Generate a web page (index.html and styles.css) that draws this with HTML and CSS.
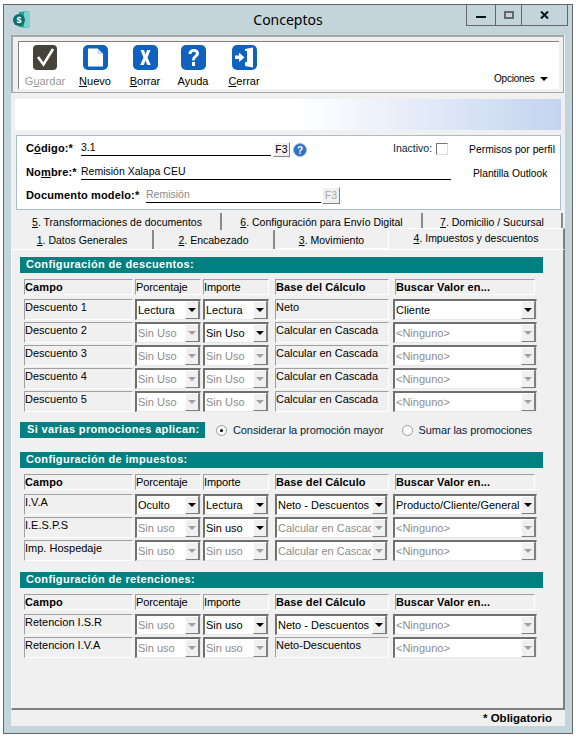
FILE: index.html
```html
<!DOCTYPE html>
<html lang="es">
<head>
<meta charset="UTF-8">
<meta name="viewport" content="width=device-width, initial-scale=1.0">
<title>Conceptos</title>
<link rel="stylesheet" href="styles.css">
</head>
<body>
<div class="window">

  <!-- Title bar -->
  <div class="titlebar">
    <svg class="app-icon" width="17" height="17" viewBox="0 0 17 17">
      <path d="M6 1 L15 0 L17 2 V15 L15 17 L6 16 Z" fill="#1fa39a"/>
      <path d="M11 1 L15 0 L17 2 V15 L15 17 L11 16 Z" fill="#7fd0c8"/>
      <circle cx="6" cy="9" r="6" fill="#0b6f6c"/>
      <text x="6" y="12" font-size="9" font-weight="bold" fill="#fff" text-anchor="middle" font-family="Liberation Sans">$</text>
    </svg>
    <div class="title">Conceptos</div>
    <div class="winbtns">
      <div class="winbtn btn-min"><span class="min-bar"></span></div>
      <div class="winbtn btn-max"><span class="max-box"></span></div>
      <div class="winbtn btn-close">
        <svg width="9" height="8" viewBox="0 0 9 8"><path d="M1 0.5 L8 7.5 M8 0.5 L1 7.5" stroke="#111" stroke-width="2"/></svg>
      </div>
    </div>
  </div>

  <div class="client">
    <!-- Toolbar -->
    <div class="toolbar">
      <div class="toolbar-inner">
        <div class="tool tool-guardar disabled">
          <svg width="24" height="25" viewBox="0 0 24 25">
            <rect width="24" height="25" rx="4" fill="#46433a"/>
            <path d="M5 12 L10.5 19.5 L20 4" fill="none" stroke="#fff" stroke-width="2.6"/>
          </svg>
          <span>G<u>u</u>ardar</span>
        </div>
        <div class="tool tool-nuevo">
          <svg width="25" height="25" viewBox="0 0 25 25">
            <rect width="25" height="25" rx="5" fill="#0f62bd"/>
            <path d="M5 3.5 H14.5 L20 9 V21.5 H5 Z" fill="#fff"/>
            <path d="M14.5 3.5 V9 H20" fill="#cfe0f2"/>
          </svg>
          <span><u>N</u>uevo</span>
        </div>
        <div class="tool tool-borrar">
          <svg width="25" height="25" viewBox="0 0 25 25">
            <rect width="25" height="25" rx="5" fill="#0f62bd"/>
            <path d="M7.5 5 H11 L12.5 9.5 L14 5 H17.5 L14.5 12.5 L17.8 20 H14.2 L12.5 15.5 L10.8 20 H7.2 L10.5 12.5 Z" fill="#fff"/>
          </svg>
          <span><u>B</u>orrar</span>
        </div>
        <div class="tool tool-ayuda">
          <svg width="25" height="25" viewBox="0 0 25 25">
            <rect width="25" height="25" rx="5" fill="#0f62bd"/>
            <path d="M7.5 9 C7.5 2.5 18 2.5 18 8.5 C18 12 13.8 12 13.8 15.5 H11 C11 10.5 14.8 11 14.8 8.5 C14.8 6 10.8 6 10.5 9 Z" fill="#fff"/>
            <rect x="11" y="17" width="3" height="4" fill="#fff"/>
          </svg>
          <span>Ayuda</span>
        </div>
        <div class="tool tool-cerrar">
          <svg width="25" height="25" viewBox="0 0 25 25">
            <rect width="25" height="25" rx="5" fill="#0f62bd"/>
            <path d="M13 4 L21 2.5 V22.5 L13 21 V17 H15 V6 H13 Z" fill="#fff"/>
            <path d="M3 10.5 H7 V7.5 L12.5 12.5 L7 17 V14 H3 Z" fill="#fff"/>
          </svg>
          <span><u>C</u>errar</span>
        </div>
        <div class="opciones">Opciones <span class="opciones-arrow"></span></div>
      </div>
    </div>

    <div class="banner-wrap"><div class="banner"></div></div>

    <!-- Header form -->
    <div class="head-form">
      <div class="head-row head-row-1">
        <span class="lbl lbl-codigo">C<u>ó</u>digo:*</span>
        <span class="field field-codigo">3.1</span>
        <span class="f3">F3</span>
        <svg class="help" width="14" height="14" viewBox="0 0 14 14">
          <circle cx="7" cy="7" r="6.5" fill="#2f6fc4" stroke="#9db8d8"/>
          <text x="7" y="11" font-size="10" font-weight="bold" fill="#fff" text-anchor="middle" font-family="Liberation Sans">?</text>
        </svg>
        <span class="inactivo">Inactivo:</span>
        <span class="check"></span>
        <span class="side side-permisos">Permisos por perfil</span>
      </div>
      <div class="head-row head-row-2">
        <span class="lbl lbl-nombre">No<u>m</u>bre:*</span>
        <span class="field field-nombre">Remisión Xalapa CEU</span>
        <span class="side side-plantilla">Plantilla Outlook</span>
      </div>
      <div class="head-row head-row-3">
        <span class="lbl lbl-doc">Documento modelo:*</span>
        <span class="field field-doc">Remisión</span>
        <span class="f3 f3-off">F3</span>
      </div>
    </div>

    <!-- Tabs -->
    <div class="tabs tabs-back">
      <div class="tab t5"><u>5</u>. Transformaciones de documentos</div>
      <div class="tab t6"><u>6</u>. Configuración para Envío Digital</div>
      <div class="tab t7"><u>7</u>. Domicilio / Sucursal</div>
    </div>
    <div class="tabs tabs-front">
      <div class="tab t1"><u>1</u>. Datos Generales</div>
      <div class="tab t2"><u>2</u>. Encabezado</div>
      <div class="tab t3"><u>3</u>. Movimiento</div>
      <div class="tab t4 active"><u>4</u>. Impuestos y descuentos</div>
    </div>

    <div class="panel">
      <div class="bar">Configuración de descuentos:</div>
      <div class="grid">
        <div class="cell head bold">Campo</div><div class="cell head">Porcentaje</div><div class="cell head">Importe</div><div class="cell head bold base">Base del Cálculo</div><div class="cell head bold buscar">Buscar Valor en...</div>

        <div class="cell">Descuento 1</div>
        <div class="sel">Lectura<i></i></div>
        <div class="sel">Lectura<i></i></div>
        <div class="cell base">Neto</div>
        <div class="sel buscar">Cliente<i></i></div>

        <div class="cell">Descuento 2</div>
        <div class="sel off">Sin Uso<i></i></div>
        <div class="sel">Sin Uso<i></i></div>
        <div class="cell base">Calcular en Cascada</div>
        <div class="sel off buscar">&lt;Ninguno&gt;<i></i></div>

        <div class="cell">Descuento 3</div>
        <div class="sel off">Sin Uso<i></i></div>
        <div class="sel off">Sin Uso<i></i></div>
        <div class="cell base">Calcular en Cascada</div>
        <div class="sel off buscar">&lt;Ninguno&gt;<i></i></div>

        <div class="cell">Descuento 4</div>
        <div class="sel off">Sin Uso<i></i></div>
        <div class="sel off">Sin Uso<i></i></div>
        <div class="cell base">Calcular en Cascada</div>
        <div class="sel off buscar">&lt;Ninguno&gt;<i></i></div>

        <div class="cell">Descuento 5</div>
        <div class="sel off">Sin Uso<i></i></div>
        <div class="sel off">Sin Uso<i></i></div>
        <div class="cell base">Calcular en Cascada</div>
        <div class="sel off buscar">&lt;Ninguno&gt;<i></i></div>
      </div>

      <div class="promo">
        <div class="bar bar-promo">Si varias promociones aplican:</div>
        <span class="radio on"></span><span class="radio-lbl">Considerar la promoción mayor</span>
        <span class="radio radio-2"></span><span class="radio-lbl">Sumar las promociones</span>
      </div>

      <div class="bar">Configuración de impuestos:</div>
      <div class="grid">
        <div class="cell head bold">Campo</div><div class="cell head">Porcentaje</div><div class="cell head">Importe</div><div class="cell head bold base">Base del Cálculo</div><div class="cell head bold buscar">Buscar Valor en...</div>

        <div class="cell">I.V.A</div>
        <div class="sel">Oculto<i></i></div>
        <div class="sel">Lectura<i></i></div>
        <div class="sel base">Neto - Descuentos<i></i></div>
        <div class="sel buscar">Producto/Cliente/General<i></i></div>

        <div class="cell">I.E.S.P.S</div>
        <div class="sel off">Sin uso<i></i></div>
        <div class="sel">Sin uso<i></i></div>
        <div class="sel off base">Calcular en Cascada<i></i></div>
        <div class="sel off buscar">&lt;Ninguno&gt;<i></i></div>

        <div class="cell">Imp. Hospedaje</div>
        <div class="sel off">Sin uso<i></i></div>
        <div class="sel off">Sin uso<i></i></div>
        <div class="sel off base">Calcular en Cascada<i></i></div>
        <div class="sel off buscar">&lt;Ninguno&gt;<i></i></div>
      </div>

      <div class="bar bar-ret">Configuración de retenciones:</div>
      <div class="grid">
        <div class="cell head bold">Campo</div><div class="cell head">Porcentaje</div><div class="cell head">Importe</div><div class="cell head bold base">Base del Cálculo</div><div class="cell head bold buscar">Buscar Valor en...</div>

        <div class="cell">Retencion I.S.R</div>
        <div class="sel off">Sin uso<i></i></div>
        <div class="sel">Sin uso<i></i></div>
        <div class="sel base">Neto - Descuentos<i></i></div>
        <div class="sel off buscar">&lt;Ninguno&gt;<i></i></div>

        <div class="cell">Retencion I.V.A</div>
        <div class="sel off">Sin uso<i></i></div>
        <div class="sel off">Sin uso<i></i></div>
        <div class="cell base">Neto-Descuentos</div>
        <div class="sel off buscar">&lt;Ninguno&gt;<i></i></div>
      </div>
    </div>

    <div class="footer">* Obligatorio</div>
  </div>
</div>
</body>
</html>
```

FILE: styles.css
```css
/* Basic Reset */
* {
    box-sizing: border-box;
}

body {
    margin: 0;
    padding: 0;
    background: #fff;
    font-family: "Liberation Sans", sans-serif;
    font-size: 11px;
    color: #000;
}

/* Window */
.window {
    width: 570px;
    height: 730px;
    margin: 4px 0 0 3px;
    background: #c3d5db;
    border: 1px solid #666;
}

.titlebar {
    height: 30px;
    position: relative;
}

.app-icon {
    position: absolute;
    left: 9px;
    top: 6px;
}

.title {
    text-align: center;
    font-family: "Noto Sans", sans-serif;
    font-size: 14px;
    line-height: 30px;
}

.winbtns {
    position: absolute;
    top: 0;
    left: 462px;
    display: flex;
    height: 21px;
    border: 1px solid #666;
    border-top: 0;
}

.winbtn {
    display: flex;
    align-items: center;
    justify-content: center;
    border-left: 1px solid #666;
}

.winbtn:first-child {
    border-left: 0;
}

.btn-min { width: 28px; }
.btn-max { width: 26px; }
.btn-close { width: 46px; }

.min-bar {
    width: 10px;
    height: 2px;
    margin-top: 3px;
    background: #111;
}

.max-box {
    width: 10px;
    height: 8px;
    border: 2px solid #666;
}

/* Client area */
.client {
    width: 554px;
    margin-left: 7px;
    background: #f0f0f0;
}

/* Toolbar */
.toolbar {
    width: 553px;
    height: 58px;
    padding: 4px 4px 3px 5px;
    border: 2px solid #a8a8a8;
    border-right-width: 1px;
    border-bottom-width: 1px;
    background: #f0f0f0;
}

.toolbar-inner {
    position: relative;
    height: 100%;
    background: #fff;
    border-top: 1px solid #808080;
    border-left: 1px solid #808080;
}

.tool {
    position: absolute;
    top: 3px;
    display: flex;
    flex-direction: column;
    align-items: center;
    width: 50px;
    line-height: 14px;
}

.tool svg {
    display: block;
    margin-bottom: 4px;
}

.tool.disabled {
    color: #9a9a9a;
}

.tool-guardar { left: 1px; }
.tool-nuevo { left: 51px; }
.tool-borrar { left: 101px; }
.tool-ayuda { left: 149px; }
.tool-cerrar { left: 200px; }

.opciones {
    position: absolute;
    left: 475px;
    top: 31px;
    font-size: 10px;
    letter-spacing: -0.2px;
    white-space: nowrap;
}

.opciones-arrow {
    display: inline-block;
    margin-left: 3px;
    border-left: 4px solid transparent;
    border-right: 4px solid transparent;
    border-top: 4px solid #000;
    vertical-align: 1px;
}

/* Gradient band */
.banner-wrap {
    padding: 6px 4px 5px 4px;
}

.banner {
    height: 31px;
    background: linear-gradient(to right, #fff 0%, #fff 52%, #c3d4ef 100%);
}

/* Header form */
.head-form {
    width: 545px;
    height: 75px;
    margin-left: 5px;
    background: #fff;
    border: 1px solid #a9bdd0;
    padding-top: 2px;
}

.head-row {
    display: flex;
    align-items: flex-end;
    font-size: 10.5px;
    white-space: nowrap;
}

.head-row-1 { height: 18px; }
.head-row-2 { height: 24px; }
.head-row-3 { height: 23px; }

.lbl {
    margin-left: 9px;
    font-size: 11px;
    font-weight: bold;
    letter-spacing: 0.15px;
    line-height: 14px;
    padding-bottom: 1px;
}

.lbl-codigo { width: 55px; }
.lbl-nombre { width: 55px; }
.lbl-doc { width: 120px; }

.field {
    height: 16px;
    line-height: 15px;
    border-bottom: 1px solid #000;
}

.field-codigo { width: 190px; }
.field-nombre { width: 370px; }
.field-doc { width: 175px; color: #8a8a8a; }

.f3 {
    width: 17px;
    height: 15px;
    margin: 0 0 -1px 2px;
    text-align: center;
    line-height: 13px;
    background: #f0f0f0;
    border: 1px solid;
    border-color: #fff #808080 #808080 #fff;
}

.f3-off {
    width: 18px;
    height: 17px;
    margin-left: 1px;
    line-height: 15px;
    color: #aaa;
}

.help {
    margin: 0 0 -1px 3px;
}

.inactivo {
    margin-left: 86px;
    padding-bottom: 1px;
    line-height: 14px;
    color: #0a1f3f;
}

.check {
    width: 12px;
    height: 12px;
    margin: 0 0 1px 4px;
    border: 1px solid;
    border-color: #777 #ddd #ddd #777;
}

.side {
    font-size: 10.3px;
    line-height: 14px;
    margin-bottom: -1px;
}

.side-permisos {
    margin-left: 21px;
}

.side-plantilla {
    margin-left: 22px;
}

/* Tabs */
.tabs {
    display: flex;
    text-align: center;
    font-size: 10.5px;
}

.tabs-back {
    height: 17px;
    margin: 3px 0 0 3px;
}

.tabs-front {
    position: relative;
    height: 19px;
    margin-left: 1px;
}

.tab {
    height: 100%;
    background: #f0f0f0;
    border-right: 2px solid #8a8a8a;
    white-space: nowrap;
}

.tabs-back .tab { line-height: 19px; }
.tabs-front .tab { line-height: 20px; }

.t5 { width: 208px; }
.t6 { width: 201px; }
.t7 { width: 140px; }
.t1 { width: 142px; }
.t2 { width: 121px; }
.t3 { width: 114px; border-right: 1px solid #fff; border-bottom: 1px solid #fff; }

.tabs-front .active {
    position: relative;
    top: -2px;
    width: 176px;
    height: 21px;
    border-top: 1px solid #fff;
    border-right: 2px solid #808080;
    line-height: 18px;
}

/* Tab panel */
.panel {
    width: 554px;
    height: 461px;
    padding: 7px 0 0 8px;
    background: #f0f0f0;
    border-top: 1px solid #fff;
    border-left: 1px solid #fff;
    border-right: 2px solid #808080;
    border-bottom: 2px solid #808080;
}

.bar {
    width: 523px;
    height: 16px;
    padding-left: 6px;
    background: #008080;
    color: #fff;
    font-weight: bold;
    line-height: 15px;
    letter-spacing: 0.35px;
    white-space: nowrap;
}

.bar-promo {
    width: 185px;
    flex: none;
    padding-left: 7px;
}

.bar-ret {
    margin-top: 11px;
}

/* Config tables */
.grid {
    display: grid;
    grid-template-columns: 109px 66px 66px 118px 146px;
    grid-template-rows: 18px;
    grid-auto-rows: 21px;
    column-gap: 2px;
    row-gap: 2px;
    margin: 6px 0 0 4px;
}

.cell {
    line-height: 14px;
    background: #f0f0f0;
    border: 1px solid;
    border-color: #a0a0a0 #fff #fff #a0a0a0;
    white-space: nowrap;
    overflow: hidden;
}

.head {
    height: 16px;
    line-height: 15px;
    letter-spacing: -0.1px;
}

.bold {
    font-weight: bold;
    letter-spacing: 0.1px;
}

.base {
    margin-left: 4px;
}

.sel.base {
    margin-right: 1px;
}

.sel.buscar {
    margin-left: 2px;
    margin-right: 0;
}

.head.buscar {
    margin-left: 4px;
    margin-right: 2px;
}

.cell.buscar {
    margin-left: 4px;
}

.sel {
    position: relative;
    height: 21px;
    padding: 0 18px 0 1px;
    line-height: 19px;
    background: #fff;
    border: 2px solid;
    border-color: #707070 #e8e8e8 #e8e8e8 #707070;
    border-right-width: 1px;
    border-bottom-width: 1px;
    white-space: nowrap;
    overflow: hidden;
}

.sel i {
    position: absolute;
    top: -1px;
    right: 0;
    width: 16px;
    height: 20px;
    background: #f0f0f0;
    border: 2px solid;
    border-color: #fff #808080 #808080 #fff;
}

.sel i::after {
    content: "";
    position: absolute;
    left: 2px;
    top: 6px;
    border-left: 4px solid transparent;
    border-right: 4px solid transparent;
    border-top: 4px solid #000;
}

.sel.off {
    color: #8c8c8c;
}

.sel.off i::after {
    border-top-color: #a0a0a0;
}

/* Promo row */
.promo {
    display: flex;
    align-items: center;
    margin: 10px 0 14px 0;
}

.radio {
    width: 11px;
    height: 11px;
    margin-left: 11px;
    background: #fff;
    border: 1px solid #999;
    border-radius: 50%;
    position: relative;
}

.radio.on::after {
    content: "";
    position: absolute;
    left: 3px;
    top: 3px;
    width: 3px;
    height: 3px;
    border-radius: 50%;
    background: #000;
}

.radio-2 {
    margin-left: 18px;
}

.radio-lbl {
    margin-left: 6px;
    letter-spacing: -0.1px;
    color: #0a1f3f;
}

/* Footer */
.footer {
    height: 16px;
    padding-right: 13px;
    text-align: right;
    font-size: 11.5px;
    font-weight: bold;
    line-height: 16px;
}
```
